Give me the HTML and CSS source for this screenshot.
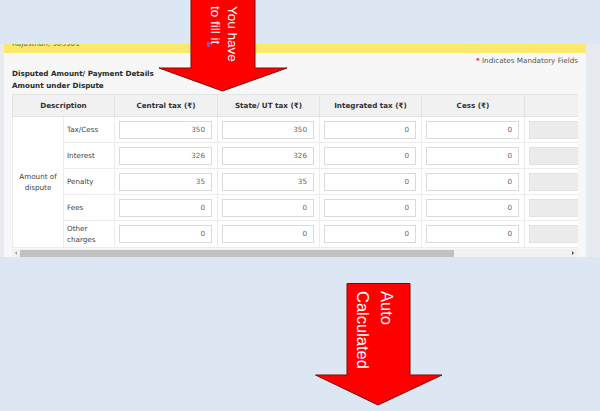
FILE: index.html
```html
<!DOCTYPE html>
<html>
<head>
<meta charset="utf-8">
<link rel="stylesheet" href="styles.css">
</head>
<body>
<div class="page">
  <div class="top-space"></div>
  <div class="shot">
    <div class="card">
      <div class="band"><span class="band-text">Rajasthan, 303901</span></div>
      <div class="content">
        <div class="mandatory"><span class="star">*</span> Indicates Mandatory Fields</div>
        <div class="section-title first">Disputed Amount/ Payment Details</div>
        <div class="section-title">Amount under Dispute</div>
        <div class="table-wrap">
          <table class="grid">
            <colgroup>
              <col class="c-half"><col class="c-half"><col class="c-wide"><col class="c-col"><col class="c-col"><col class="c-wide"><col class="c-col">
            </colgroup>
            <thead>
              <tr>
                <th colspan="2">Description</th>
                <th>Central tax (₹)</th>
                <th>State/ UT tax (₹)</th>
                <th>Integrated tax (₹)</th>
                <th>Cess (₹)</th>
                <th></th>
              </tr>
            </thead>
            <tbody>
              <tr>
                <td rowspan="5" class="group">Amount of<br>dispute</td>
                <td class="label">Tax/Cess</td>
                <td><div class="inp">350</div></td>
                <td><div class="inp">350</div></td>
                <td><div class="inp">0</div></td>
                <td><div class="inp">0</div></td>
                <td><div class="inp off"></div></td>
              </tr>
              <tr>
                <td class="label">Interest</td>
                <td><div class="inp">326</div></td>
                <td><div class="inp">326</div></td>
                <td><div class="inp">0</div></td>
                <td><div class="inp">0</div></td>
                <td><div class="inp off"></div></td>
              </tr>
              <tr>
                <td class="label">Penalty</td>
                <td><div class="inp">35</div></td>
                <td><div class="inp">35</div></td>
                <td><div class="inp">0</div></td>
                <td><div class="inp">0</div></td>
                <td><div class="inp off"></div></td>
              </tr>
              <tr>
                <td class="label">Fees</td>
                <td><div class="inp">0</div></td>
                <td><div class="inp">0</div></td>
                <td><div class="inp">0</div></td>
                <td><div class="inp">0</div></td>
                <td><div class="inp off"></div></td>
              </tr>
              <tr class="tall">
                <td class="label">Other<br>charges</td>
                <td><div class="inp">0</div></td>
                <td><div class="inp">0</div></td>
                <td><div class="inp">0</div></td>
                <td><div class="inp">0</div></td>
                <td><div class="inp off"></div></td>
              </tr>
            </tbody>
          </table>
        </div>
        <div class="scrollbar">
          <span class="arr-left"></span>
          <span class="thumb"></span>
          <span class="track-fill"></span>
          <span class="arr-right"></span>
        </div>
      </div>
    </div>
  </div>

  <div class="callout callout-top">
    <svg class="arrow-svg" width="130" height="93" viewBox="0 0 130 93">
      <polygon points="33,0 97,0 97,69 129,69 64.5,92 1,69 33,69" fill="#ff0000" stroke="#7a0a0a" stroke-width="1"/>
    </svg>
    <div class="arrow-text text-top">You have to fill it</div>
    <span class="caret"></span>
  </div>

  <div class="callout callout-bottom">
    <svg class="arrow-svg" width="128" height="124" viewBox="0 0 128 124">
      <polygon points="32,0.5 95,0.5 95,92 127,92 63,122 0.5,92 32,92" fill="#ff0000" stroke="#7a0a0a" stroke-width="1"/>
    </svg>
    <div class="arrow-text text-bottom">Auto Calculated</div>
  </div>
</div>
</body>
</html>
```

FILE: styles.css
```css
* { box-sizing: border-box; }
html, body { margin: 0; padding: 0; }
body {
  width: 600px;
  height: 411px;
  overflow: hidden;
  background: #dde7f3;
  font-family: "DejaVu Sans", Verdana, sans-serif;
}
.page {
  position: relative;
  width: 600px;
  height: 411px;
}
.top-space { height: 44px; }
.shot {
  display: flex;
  height: 213px;
  background: #e7eaee;
  padding-left: 4px;
  padding-right: 14px;
}
.card {
  flex: 1;
  min-width: 0;
  background: #f7f7f7;
  display: flex;
  flex-direction: column;
}
.band {
  height: 11px;
  background: #fbe96c;
  overflow: hidden;
  padding-left: 8px;
}
.band-text {
  display: block;
  margin-top: -5px;
  font-size: 7.2px;
  line-height: 10px;
  color: #6b6b5a;
}
.content {
  padding: 0 8px;
  min-width: 0;
}
.mandatory {
  margin-top: 3px;
  text-align: right;
  font-size: 7.2px;
  line-height: 10px;
  color: #555;
}
.star { color: #e0141e; font-weight: bold; }
.section-title {
  font-size: 7.2px;
  font-weight: bold;
  line-height: 12px;
  color: #2b2b2b;
}
.section-title.first { margin-top: 2px; }
.table-wrap {
  margin-top: 2px;
  overflow: hidden;
  background: #fff;
}
.grid {
  border-collapse: collapse;
  table-layout: fixed;
  width: 614px;
  font-size: 7.2px;
  color: #3f3f3f;
}
.c-half { width: 51px; }
.c-wide { width: 103px; }
.c-col { width: 102px; }
.grid th {
  height: 22px;
  background: #f1f1f1;
  border: 1px solid #e3e3e3;
  font-weight: bold;
  color: #333;
  text-align: center;
  padding: 0;
}
.grid td {
  height: 26px;
  border: 1px solid #ececec;
  padding: 0 5px 0 4px;
  background: #fff;
}
.grid tr.tall td { height: 27px; }
.grid td.group {
  text-align: center;
  line-height: 11px;
  padding: 0 2px;
}
.grid td.label {
  padding-left: 3px;
  line-height: 11px;
}
.inp {
  height: 18px;
  border: 1px solid #dadada;
  background: #fff;
  text-align: right;
  padding-right: 6px;
  line-height: 16px;
  color: #666;
}
.inp.off {
  background: #ebebeb;
  border-color: #e2e2e2;
}
.scrollbar {
  display: flex;
  align-items: center;
  height: 8px;
  margin-top: 1px;
  background: #f1f1f1;
}
.arr-left {
  width: 0;
  height: 0;
  margin-left: 3px;
  border-top: 2px solid transparent;
  border-bottom: 2px solid transparent;
  border-right: 2px solid #a3a3a3;
}
.thumb {
  margin-left: 3px;
  width: 434px;
  height: 7px;
  background: #c1c1c1;
}
.track-fill { flex: 1; }
.arr-right {
  width: 0;
  height: 0;
  margin-right: 4px;
  border-top: 2px solid transparent;
  border-bottom: 2px solid transparent;
  border-left: 2px solid #505050;
}

/* Callout arrows overlaying the screenshot */
.callout { position: absolute; }
.arrow-svg { display: block; }
.callout-top {
  left: 158px;
  top: -1px;
  width: 130px;
  height: 93px;
}
.callout-bottom {
  left: 315px;
  top: 283px;
  width: 128px;
  height: 124px;
}
.arrow-text {
  position: absolute;
  writing-mode: vertical-rl;
  color: #fff;
  font-family: "Liberation Sans", Arial, sans-serif;
}
.text-top {
  left: 49px;
  top: 7px;
  width: 34px;
  font-size: 13.5px;
  line-height: 17px;
  height: 60px;
}
.text-bottom {
  left: 36px;
  top: 8px;
  width: 48px;
  font-size: 16.5px;
  line-height: 24px;
  height: 80px;
}
.caret {
  position: absolute;
  left: 49px;
  top: 43px;
  width: 3px;
  height: 5px;
  background: #7b5bb8;
}
```
